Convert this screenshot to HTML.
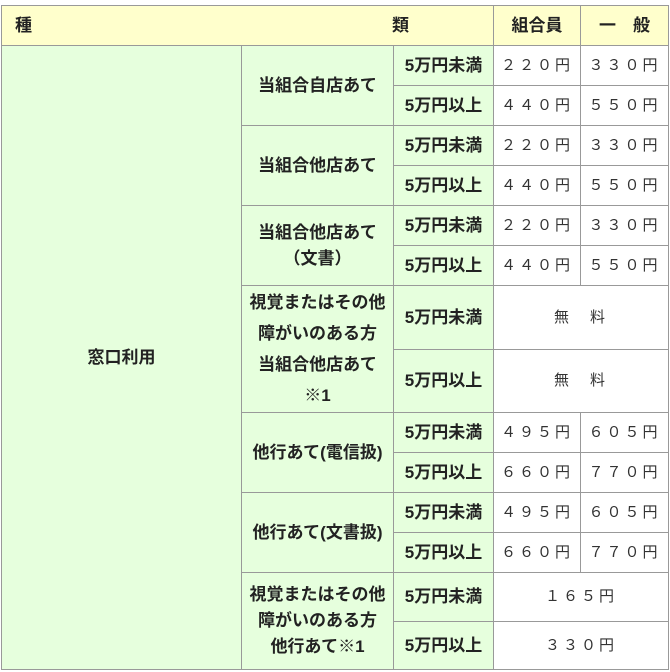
<!DOCTYPE html>
<html><head><meta charset="utf-8"><style>
html,body{margin:0;padding:0;background:#fff;}
body{width:670px;height:672px;overflow:hidden;font-family:"Liberation Sans","Noto Sans CJK JP",sans-serif;color:#222;}
table{position:absolute;left:1px;top:5px;border-collapse:collapse;table-layout:fixed;width:668px;}
td{border:1px solid #999;padding:0;font-size:17px;text-align:center;vertical-align:middle;line-height:26px;}
.h{background:#ffffcc;font-weight:bold;}
.g{background:#e6ffdd;font-weight:bold;}
.v{background:#fff;letter-spacing:3px;font-size:15px;color:#333;}
.hh{display:flex;justify-content:space-between;padding:0 84px 0 13px;}
</style></head><body>
<table>
<colgroup><col style="width:240px"><col style="width:152px"><col style="width:100px"><col style="width:87px"><col style="width:88px"></colgroup>
<tr style="height:40px"><td class="h" colspan="3"><div class="hh"><span>種</span><span>類</span></div></td><td class="h">組合員</td><td class="h">一　般</td></tr>
<tr style="height:40px"><td class="g" rowspan="15">窓口利用</td><td class="g" rowspan="2">当組合自店あて</td><td class="g">5万円未満</td><td class="v">２２０円</td><td class="v">３３０円</td></tr>
<tr style="height:40px"><td class="g">5万円以上</td><td class="v">４４０円</td><td class="v">５５０円</td></tr>
<tr style="height:40px"><td class="g" rowspan="2">当組合他店あて</td><td class="g">5万円未満</td><td class="v">２２０円</td><td class="v">３３０円</td></tr>
<tr style="height:40px"><td class="g">5万円以上</td><td class="v">４４０円</td><td class="v">５５０円</td></tr>
<tr style="height:40px"><td class="g" rowspan="2">当組合他店あて<br>（文書）</td><td class="g">5万円未満</td><td class="v">２２０円</td><td class="v">３３０円</td></tr>
<tr style="height:40px"><td class="g">5万円以上</td><td class="v">４４０円</td><td class="v">５５０円</td></tr>
<tr style="height:64px"><td class="g" rowspan="2" style="line-height:31px">視覚またはその他<br>障がいのある方<br>当組合他店あて<br>※1</td><td class="g">5万円未満</td><td class="v" colspan="2">無　料</td></tr>
<tr style="height:63px"><td class="g">5万円以上</td><td class="v" colspan="2">無　料</td></tr>
<tr style="height:40px"><td class="g" rowspan="2">他行あて(電信扱)</td><td class="g">5万円未満</td><td class="v">４９５円</td><td class="v">６０５円</td></tr>
<tr style="height:40px"><td class="g">5万円以上</td><td class="v">６６０円</td><td class="v">７７０円</td></tr>
<tr style="height:40px"><td class="g" rowspan="2">他行あて(文書扱)</td><td class="g">5万円未満</td><td class="v">４９５円</td><td class="v">６０５円</td></tr>
<tr style="height:40px"><td class="g">5万円以上</td><td class="v">６６０円</td><td class="v">７７０円</td></tr>
<tr style="height:49px"><td class="g" rowspan="2" style="line-height:26px">視覚またはその他<br>障がいのある方<br>他行あて※1</td><td class="g">5万円未満</td><td class="v" colspan="2">１６５円</td></tr>
<tr style="height:48px"><td class="g">5万円以上</td><td class="v" colspan="2">３３０円</td></tr>
</table>
</body></html>
